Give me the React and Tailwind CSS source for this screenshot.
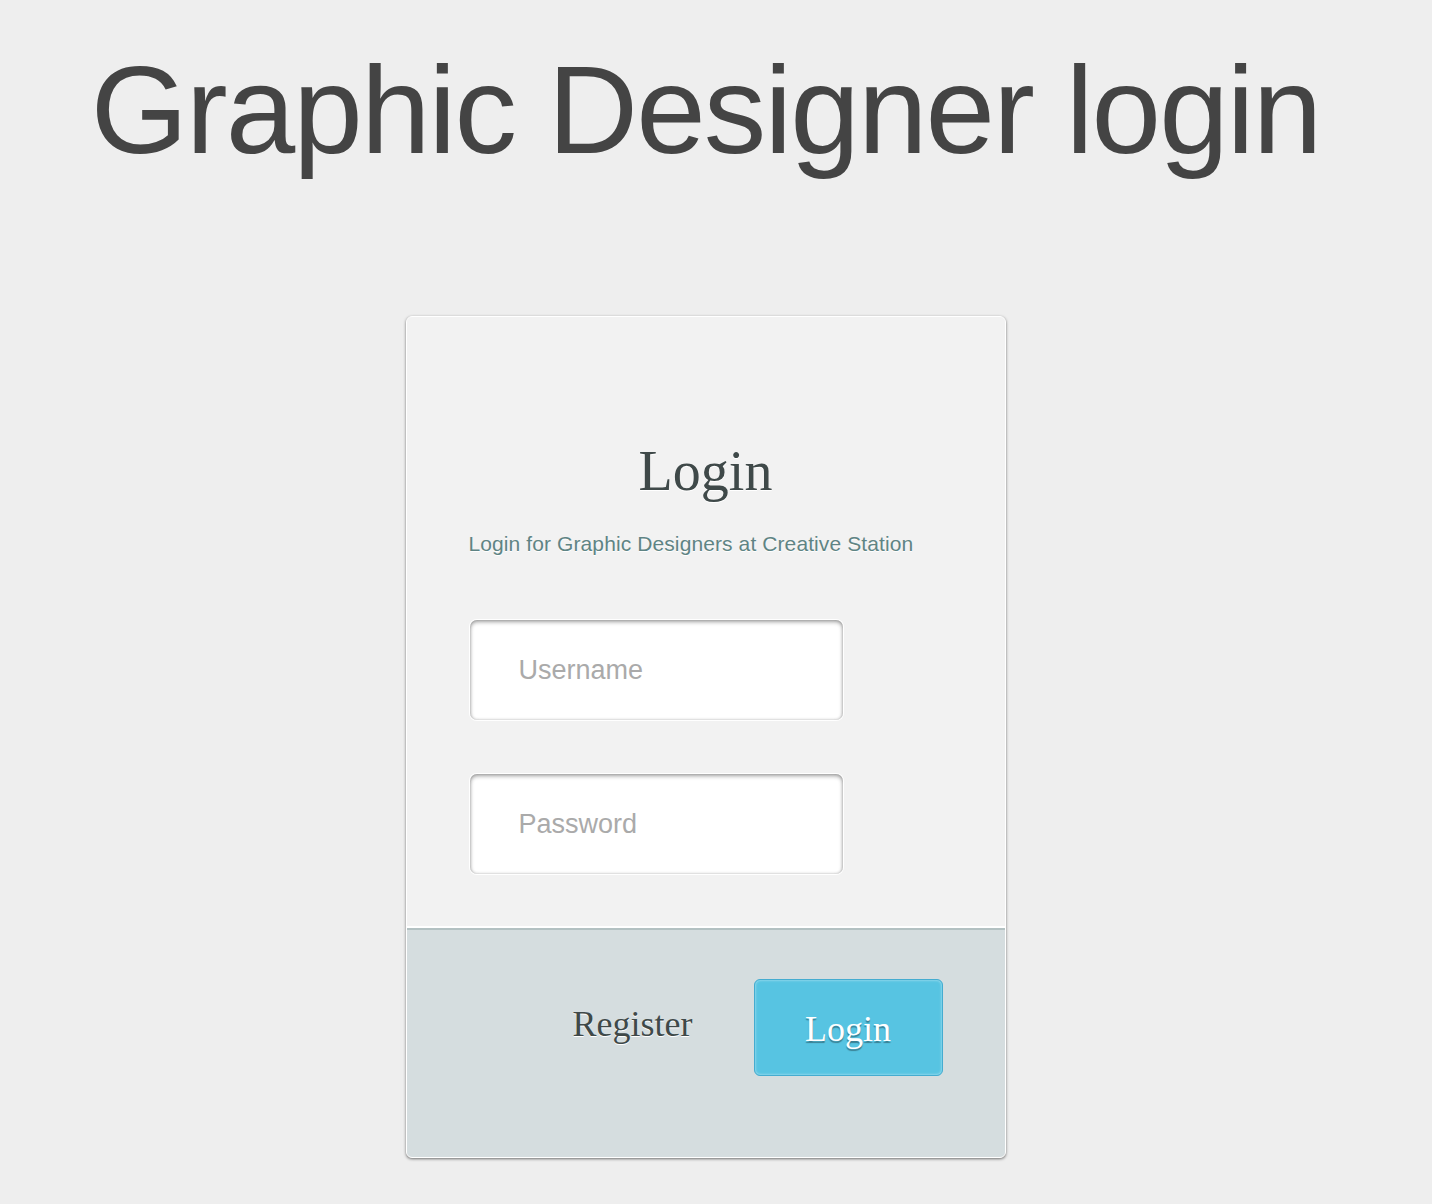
import React from "react";

const serif = { fontFamily: '"Liberation Serif", "Times New Roman", serif' };

const LoginCard = () => {
  return (
    <div className="w-[600px] rounded-[6px] border border-white bg-[#f2f2f2] shadow-[0_1px_3px_rgba(0,0,0,0.55)] overflow-hidden">
      <div className="px-[62px] pt-[126px] pb-[52px]">
        <h2
          className="text-center text-[56px] leading-none text-[#3f4949] [text-shadow:0_1px_0_#fff]"
          style={serif}
        >
          Login
        </h2>
        <p className="mt-[34px] text-[21px] leading-none tracking-[0.1px] text-[#5f8484] [text-shadow:0_1px_0_#fff]">
          Login for Graphic Designers at Creative Station
        </p>
        <div className="mt-[66px] ml-[1px] flex flex-col gap-[54px]">
          <input
            type="text"
            placeholder="Username"
            className="w-[373px] h-[100px] rounded-[7px] border-0 bg-white pl-[49px] text-[27px] text-[#555] placeholder:text-[#aaaaaa] outline-none shadow-[inset_0_2px_4px_rgba(0,0,0,0.35),inset_0_0_3px_rgba(0,0,0,0.22),0_0_0_1px_#fff]"
          />
          <input
            type="password"
            placeholder="Password"
            className="w-[373px] h-[100px] rounded-[7px] border-0 bg-white pl-[49px] text-[27px] text-[#555] placeholder:text-[#aaaaaa] outline-none shadow-[inset_0_2px_4px_rgba(0,0,0,0.35),inset_0_0_3px_rgba(0,0,0,0.22),0_0_0_1px_#fff]"
          />
        </div>
      </div>
      <div className="border-t-2 border-white">
        <div className="border-t-2 border-[#b3c1c2] bg-[#d5dddf] h-[229px] flex justify-end items-start gap-[61px] pr-[62px] pt-[49px]">
          <a
            href="#"
            className="mt-[27px] text-[36px] leading-none text-[#3f4949] [text-shadow:0_1px_0_#fff]"
            style={serif}
          >
            Register
          </a>
          <button
            type="button"
            className="w-[189px] h-[97px] rounded-[6px] border border-[#45acd0] bg-[#57c4e2] text-white text-[36px] leading-none pt-[2px] shadow-[inset_0_0_3px_rgba(255,255,255,0.6)] [text-shadow:0_2px_1px_rgba(0,0,0,0.35)]"
            style={serif}
          >
            Login
          </button>
        </div>
      </div>
    </div>
  );
};

const App = () => {
  return (
    <div
      className="min-h-[1204px] bg-[#eeeeee] flex flex-col items-center pr-[21px] pt-[47px]"
      style={{ fontFamily: '"Liberation Sans", Arial, sans-serif' }}
    >
      <h1 className="text-[125px] leading-none tracking-[-1.9px] text-[#444444] whitespace-nowrap">
        Graphic Designer login
      </h1>
      <div className="mt-[144px]">
        <LoginCard />
      </div>
    </div>
  );
};

export default App;
